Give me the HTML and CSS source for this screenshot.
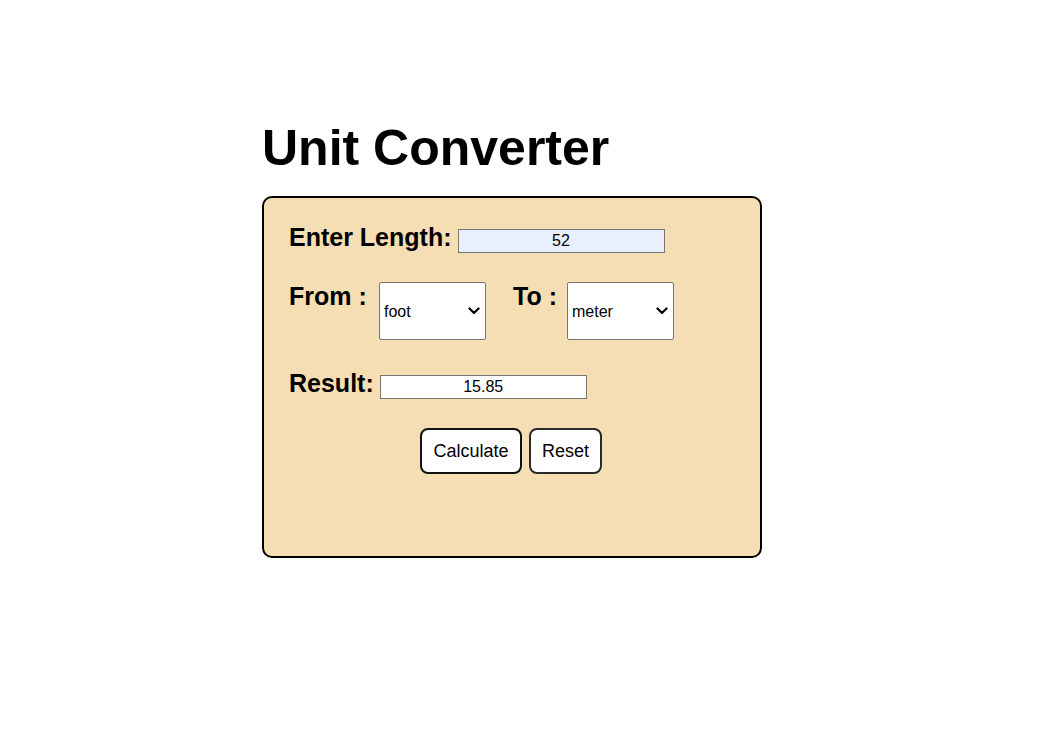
FILE: index.html
```html
<!DOCTYPE html>
<html lang="en">
<head>
<meta charset="utf-8">
<title>Unit Converter</title>
<link rel="stylesheet" href="styles.css">
</head>
<body>
<main class="page">
  <h1 class="title">Unit Converter</h1>
  <div class="card">
    <div class="row row-base">
      <label class="lbl lbl-length" for="len">Enter Length:</label>
      <input class="field field-auto" id="len" type="text" value="52">
    </div>
    <div class="row row-top">
      <label class="lbl lbl-from" for="from">From :</label>
      <select class="unit" id="from">
        <option>foot</option>
        <option>meter</option>
        <option>inch</option>
      </select>
      <label class="lbl lbl-to" for="to">To :</label>
      <select class="unit" id="to">
        <option>meter</option>
        <option>foot</option>
        <option>inch</option>
      </select>
    </div>
    <div class="row row-base">
      <label class="lbl lbl-result" for="res">Result:</label>
      <input class="field" id="res" type="text" value="15.85" readonly>
    </div>
    <div class="actions">
      <button class="btn btn-calc" type="button">Calculate</button>
      <button class="btn btn-reset" type="button">Reset</button>
    </div>
  </div>
</main>
</body>
</html>
```
FILE: styles.css
```css
html, body {
  margin: 0;
  padding: 0;
  background: #ffffff;
}
body {
  font-family: "Liberation Sans", Arial, sans-serif;
  color: #000;
}
.page {
  padding-left: 262px;
  padding-top: 119px;
}
.title {
  margin: 0 0 19px 0;
  font-size: 50px;
  font-weight: bold;
  line-height: normal;
}
.card {
  box-sizing: border-box;
  width: 500px;
  height: 362px;
  background: #f5deb3;
  border: 2px solid #000;
  border-radius: 10px;
  padding: 25px 25px 0 25px;
}
.row {
  display: flex;
  margin-bottom: 29px;
}
.row-base {
  align-items: baseline;
}
.row-top {
  align-items: flex-start;
}
.lbl {
  font-size: 25px;
  font-weight: bold;
  line-height: normal;
}
.lbl-length {
  margin-right: 6px;
}
.lbl-result {
  margin-right: 6px;
}
.lbl-from {
  width: 90px;
  flex: none;
}
.lbl-to {
  width: 54px;
  flex: none;
  margin-left: 27px;
}
.field {
  box-sizing: border-box;
  width: 207px;
  height: 24px;
  border: 1px solid #767676;
  padding: 1px 2px;
  font-family: "Liberation Sans", Arial, sans-serif;
  font-size: 16px;
  text-align: center;
  background: #ffffff;
  color: #000;
  border-radius: 0;
}
.field-auto {
  background: #e8f0fe;
}
.unit {
  box-sizing: border-box;
  width: 107px;
  height: 58px;
  padding: 0 20px 0 4px;
  font-family: "Liberation Sans", Arial, sans-serif;
  font-size: 16px;
  border: 1px solid #767676;
  border-radius: 2px;
  color: #000;
  flex: none;
  -webkit-appearance: none;
  appearance: none;
  background-color: #fff;
  background-image: url("data:image/svg+xml;utf8,<svg xmlns='http://www.w3.org/2000/svg' width='12' height='8' viewBox='0 0 12 8'><path d='M1.5 1.5 L6 6 L10.5 1.5' fill='none' stroke='%23000' stroke-width='2.2' stroke-linecap='round' stroke-linejoin='round'/></svg>");
  background-repeat: no-repeat;
  background-position: right 5px center;
  background-size: 12px 8px;
}
.actions {
  display: flex;
  justify-content: center;
  gap: 7px;
  padding-right: 2px;
}
.btn {
  box-sizing: border-box;
  height: 46px;
  padding: 0 10px;
  font-family: "Liberation Sans", Arial, sans-serif;
  font-size: 18px;
  background: #fff;
  color: #000;
  border: 2px solid #111;
  border-radius: 8px;
}
.btn-calc {
  width: 102px;
}
.btn-reset {
  width: 73px;
  border-color: #2a2a2a;
}
```
